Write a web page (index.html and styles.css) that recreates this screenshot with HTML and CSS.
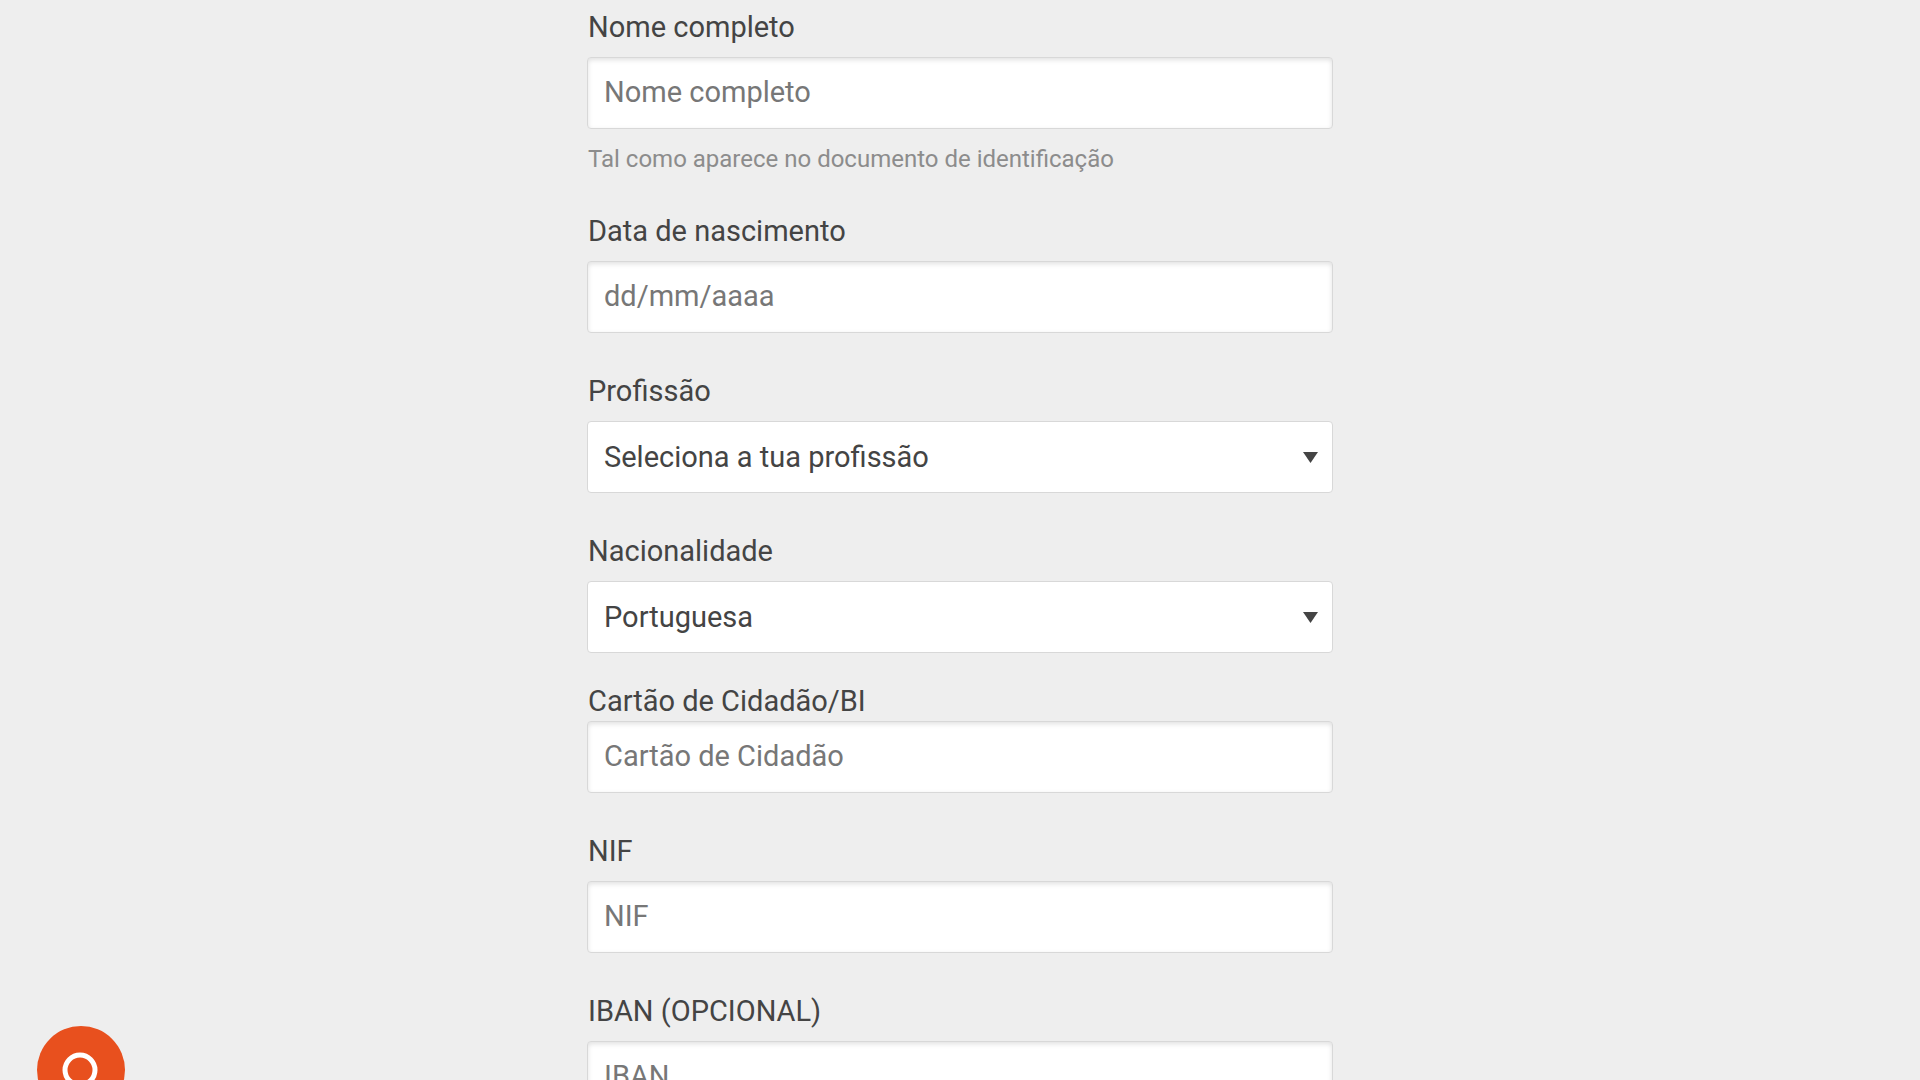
FILE: index.html
```html
<!DOCTYPE html>
<html lang="pt">
<head>
  <meta charset="UTF-8" />
  <meta name="viewport" content="width=device-width, initial-scale=1.0"/>
  <title>Dados pessoais</title>
  <link rel="stylesheet" href="styles.css">
</head>
<body>

<form class="form">
  <div class="field">
    <label for="name">Nome completo</label>
    <input type="text" id="name" placeholder="Nome completo" aria-describedby="nameHelp">
    <p class="help" id="nameHelp">Tal como aparece no documento de identificação</p>
  </div>

  <div class="field">
    <label for="birth">Data de nascimento</label>
    <input type="text" id="birth" placeholder="dd/mm/aaaa">
  </div>

  <div class="field">
    <label for="job">Profissão</label>
    <select id="job">
      <option>Seleciona a tua profissão</option>
    </select>
  </div>

  <div class="field field-before-id">
    <label for="nationality">Nacionalidade</label>
    <select id="nationality">
      <option>Portuguesa</option>
    </select>
  </div>

  <div class="field field-id">
    <label for="idCard">Cartão de Cidadão/BI</label>
    <input type="text" id="idCard" placeholder="Cartão de Cidadão">
  </div>

  <div class="field">
    <label for="nif">NIF</label>
    <input type="text" id="nif" placeholder="NIF">
  </div>

  <div class="field">
    <label for="iban">IBAN (OPCIONAL)</label>
    <input type="text" id="iban" placeholder="IBAN">
  </div>
</form>

<!-- Floating help button -->
<button class="help-btn" type="button" aria-label="Ajuda">
  <svg viewBox="0 0 88 88" fill="none" stroke="#fff" stroke-width="5">
    <circle cx="43" cy="44" r="15"/>
  </svg>
</button>

</body>
</html>
```
FILE: styles.css
```css
* { box-sizing: border-box; margin: 0; padding: 0; }

html, body {
  height: 100%;
  overflow: hidden;
  background: #eee;
  color: #444;
  font-family: Roboto, sans-serif;
  font-size: 29px;
}

.form {
  width: 100%;
  max-width: 746px;
  margin: 0 auto;
  padding-top: 7px;
}

.field {
  display: flex;
  flex-direction: column;
  margin-bottom: 38px;
}

.field-before-id { margin-bottom: 28px; }

label {
  line-height: 40px;
  margin-bottom: 10px;
  padding-left: 1px;
}

.field-id label { margin-bottom: 0; }

input, select {
  width: 100%;
  height: 72px;
  padding: 0 16px;
  border: 1px solid #d8d8d8;
  border-radius: 4px;
  background: #fff;
  color: #444;
  font: inherit;
}

input {
  padding-bottom: 2px;
  box-shadow: inset 0 2px 5px rgba(0,0,0,0.12);
}

input::placeholder { color: #777; }

select {
  appearance: none;
  background: #fff url("data:image/svg+xml,%3Csvg xmlns='http://www.w3.org/2000/svg' width='15' height='11'%3E%3Cpath d='M0 0h15L7.5 11z' fill='%23444'/%3E%3C/svg%3E") no-repeat right 14px center;
}

.help {
  margin-top: 16px;
  padding-left: 1px;
  font-size: 24px;
  line-height: 28px;
  color: #8c8c8c;
}

.help-btn {
  position: fixed;
  left: 37px;
  bottom: -34px;
  width: 88px;
  height: 88px;
  border: none;
  border-radius: 50%;
  background: #e8501e;
  cursor: pointer;
}

.help-btn svg { display: block; }
```
